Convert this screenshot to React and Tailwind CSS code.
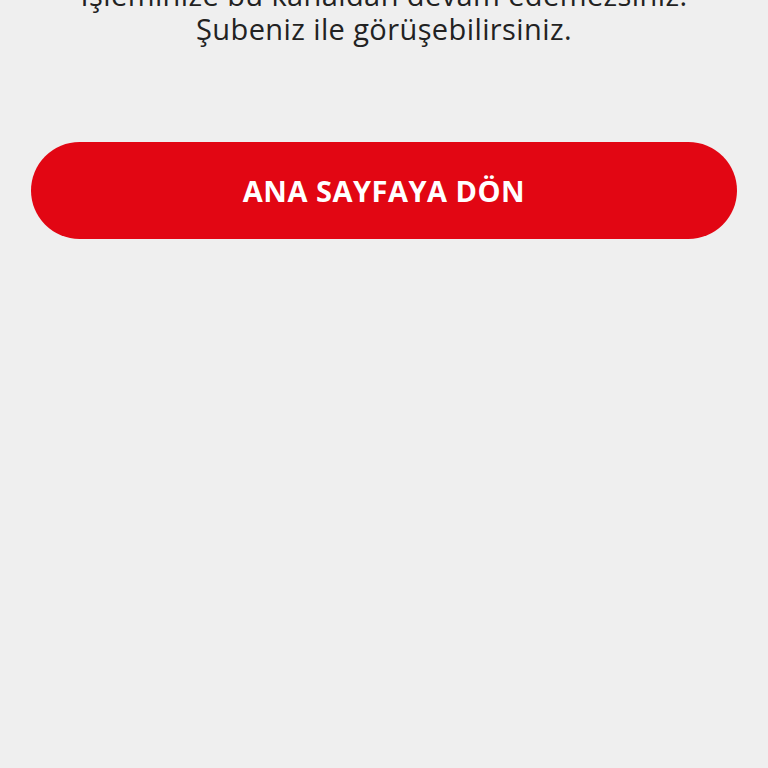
export default function App() {
  return (
    <div className="min-h-[768px] bg-[#efefef] px-[31px] font-['Open_Sans',sans-serif] overflow-hidden">
      <p className="-mt-[22px] text-center text-[29px] font-normal leading-[34px] text-[#222222] tracking-[0.4px]">
        İşleminize bu kanaldan devam edemezsiniz.
        <br />
        Şubeniz ile görüşebilirsiniz.
      </p>
      <button className="mt-[96px] flex h-[97px] w-full items-center justify-center rounded-full bg-[#e20613] text-[29px] font-bold tracking-[0.5px] text-white">
        ANA SAYFAYA DÖN
      </button>
    </div>
  );
}
